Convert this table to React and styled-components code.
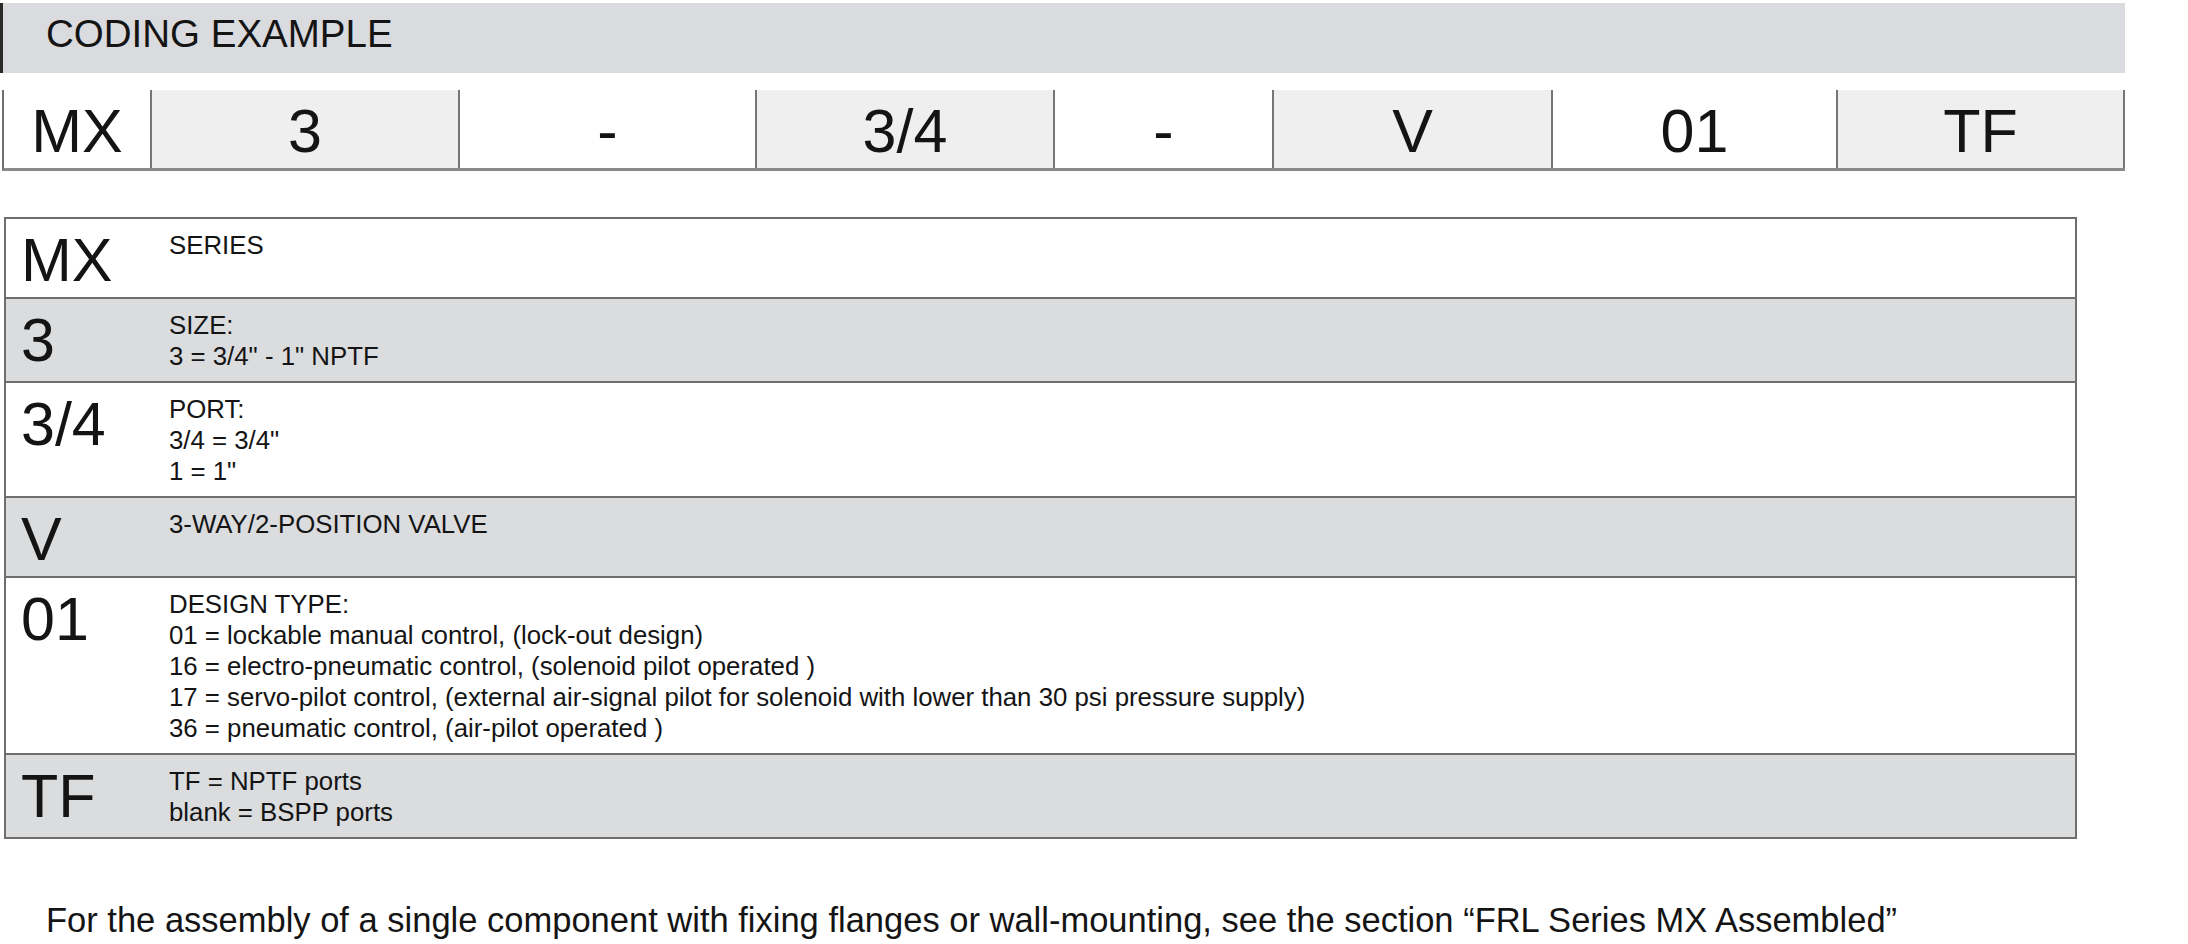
import React from "react";
import styled, { createGlobalStyle } from "styled-components";

const GlobalStyle = createGlobalStyle`
  body {
    margin: 0;
    background: #ffffff;
    font-family: "Liberation Sans", Arial, sans-serif;
    color: #141414;
  }
`;

const Page = styled.div`
  width: 2188px;
  padding-top: 3px;
`;

const HeaderBar = styled.div`
  box-sizing: border-box;
  width: 2125px;
  height: 70px;
  padding: 12px 0 0 43px;
  background: #d9dbde;
  border-left: 3px solid #2a2a2a;
  font-size: 38.5px;
  line-height: 38px;
`;

const CodeRow = styled.div`
  box-sizing: border-box;
  display: flex;
  width: 2123px;
  height: 81px;
  margin: 17px 0 0 2px;
  border-left: 2px solid #6f6f6f;
  border-bottom: 3px solid #8a8a8a;
`;

const CodeCell = styled.div`
  box-sizing: border-box;
  width: ${(p) => p.$w}px;
  display: flex;
  align-items: center;
  justify-content: center;
  padding-top: 5px;
  background: ${(p) => (p.$shaded ? "#efefef" : "#ffffff")};
  border-right: 2px solid #767676;
  font-size: 61px;
  line-height: 61px;
`;

const Table = styled.div`
  box-sizing: border-box;
  width: 2073px;
  margin: 46px 0 0 4px;
  border: 2px solid #6e6e6e;
`;

const Row = styled.div`
  display: flex;
  min-height: 78px;
  background: ${(p) => (p.$shaded ? "#dadcde" : "#ffffff")};
  border-bottom: 2px solid #6e6e6e;

  &:last-child {
    border-bottom: none;
  }
`;

const Code = styled.div`
  width: 163px;
  padding: 11px 0 5px 15px;
  box-sizing: border-box;
  font-size: 61px;
  line-height: 61px;
`;

const Desc = styled.div`
  flex: 1;
  padding: 11px 0 9px 0;
  font-size: 25.8px;
  line-height: 31px;
`;

const Footer = styled.p`
  margin: 62px 0 0 46px;
  font-size: 34.5px;
  line-height: 39px;
`;

const codeCells = [
  { text: "MX", w: 148 },
  { text: "3", w: 308, shaded: true },
  { text: "-", w: 297 },
  { text: "3/4", w: 298, shaded: true },
  { text: "-", w: 219 },
  { text: "V", w: 279, shaded: true },
  { text: "01", w: 285 },
  { text: "TF", w: 287, shaded: true },
];

const rows = [
  { code: "MX", lines: ["SERIES"] },
  { code: "3", lines: ["SIZE:", '3 = 3/4" - 1" NPTF'] },
  { code: "3/4", lines: ["PORT:", '3/4 = 3/4"', '1 = 1"'] },
  { code: "V", lines: ["3-WAY/2-POSITION VALVE"] },
  {
    code: "01",
    lines: [
      "DESIGN TYPE:",
      "01 = lockable manual control, (lock-out design)",
      "16 = electro-pneumatic control, (solenoid pilot operated )",
      "17 = servo-pilot control, (external air-signal pilot for solenoid with lower than 30 psi pressure supply)",
      "36 = pneumatic control, (air-pilot operated )",
    ],
  },
  { code: "TF", lines: ["TF = NPTF ports", "blank = BSPP ports"] },
];

export default function App() {
  return (
    <Page>
      <GlobalStyle />
      <HeaderBar>CODING EXAMPLE</HeaderBar>
      <CodeRow>
        {codeCells.map((c, i) => (
          <CodeCell key={i} $w={c.w} $shaded={c.shaded}>
            {c.text}
          </CodeCell>
        ))}
      </CodeRow>
      <Table>
        {rows.map((r, i) => (
          <Row key={r.code} $shaded={i % 2 === 1}>
            <Code>{r.code}</Code>
            <Desc>
              {r.lines.map((l) => (
                <div key={l}>{l}</div>
              ))}
            </Desc>
          </Row>
        ))}
      </Table>
      <Footer>
        For the assembly of a single component with fixing flanges or
        wall-mounting, see the section “FRL Series MX Assembled”
      </Footer>
    </Page>
  );
}
